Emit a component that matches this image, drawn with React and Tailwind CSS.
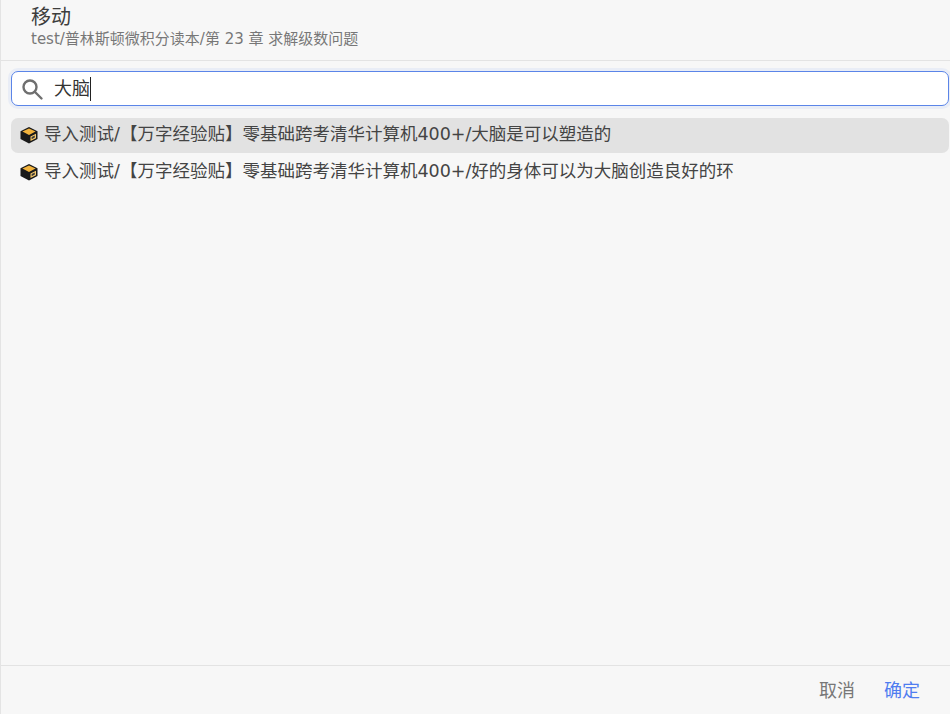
import React from 'react';

const font = 'font-["DejaVu_Sans","Noto_Sans_CJK_SC",sans-serif]';

const BoxIcon = () => (
  <svg width="18" height="18" viewBox="0 0 18 18" className="shrink-0">
    <path d="M9 1 17.5 5.2V13L9 17.5 .5 13V5.2Z" fill="#1a1a1a" />
    <path d="M9 2.4 15.6 5.6 9 8.9 2.4 5.6Z" fill="#f2b33d" />
    <path d="M10.5 10.5 16 7.8V12.2L10.5 15Z" fill="#f7c96a" />
    <path d="M11.6 11.1 14.8 9.5V11.6L11.6 13.2Z" fill="#3a3a3a" />
  </svg>
);

const results = [
  '导入测试/【万字经验贴】零基础跨考清华计算机400+/大脑是可以塑造的',
  '导入测试/【万字经验贴】零基础跨考清华计算机400+/好的身体可以为大脑创造良好的环',
];

export default function App() {
  return (
    <div className={`h-[714px] w-[950px] flex flex-col overflow-hidden bg-[#f7f7f7] border-l border-[#e4e4e4] ${font}`}>
      {/* header */}
      <div className="h-[61px] shrink-0 border-b border-[#e3e3e3] pl-[30px] pt-[5px]">
        <div className="text-[20px] leading-[25px] text-[#3d3d3d]">移动</div>
        <div className="text-[15px] leading-[18px] text-[#777777]">test/普林斯顿微积分读本/第 23 章 求解级数问题</div>
      </div>

      {/* search */}
      <div className="pl-[10px] pr-[1px] pt-[10px]">
        <div className="h-[35px] flex items-center rounded-[7px] bg-white border border-[#5b85e8] shadow-[0_0_0_3px_#e9edf6] pl-[8px]">
          <svg width="24" height="24" viewBox="0 0 24 24" fill="none" stroke="#6f6f6f" strokeWidth="2.4" className="shrink-0">
            <circle cx="10" cy="10" r="6.5" />
            <path d="M15 15 21.5 21.5" strokeLinecap="round" />
          </svg>
          <span className="ml-[10px] text-[18px] leading-[24px] text-[#333333] border-r border-[#222222] -mr-px">大脑</span>
        </div>
      </div>

      {/* results */}
      <div className="flex-1 pl-[10px] pr-[1px] pt-[12px]">
        {results.map((text, i) => (
          <div
            key={text}
            className={`h-[35px] mb-[2px] flex items-center gap-[6px] rounded-[7px] pl-[9px] pb-[2px] text-[17.5px] text-[#444444] whitespace-nowrap ${i === 0 ? 'bg-[#e2e2e2]' : ''}`}
          >
            <BoxIcon />
            <span>{text}</span>
          </div>
        ))}
      </div>

      {/* footer */}
      <div className="h-[49px] shrink-0 border-t border-[#e3e3e3] flex items-center justify-end gap-[29px] pr-[30px] text-[18px]">
        <span className="text-[#777777]">取消</span>
        <span className="text-[#4f7df0]">确定</span>
      </div>
    </div>
  );
}
